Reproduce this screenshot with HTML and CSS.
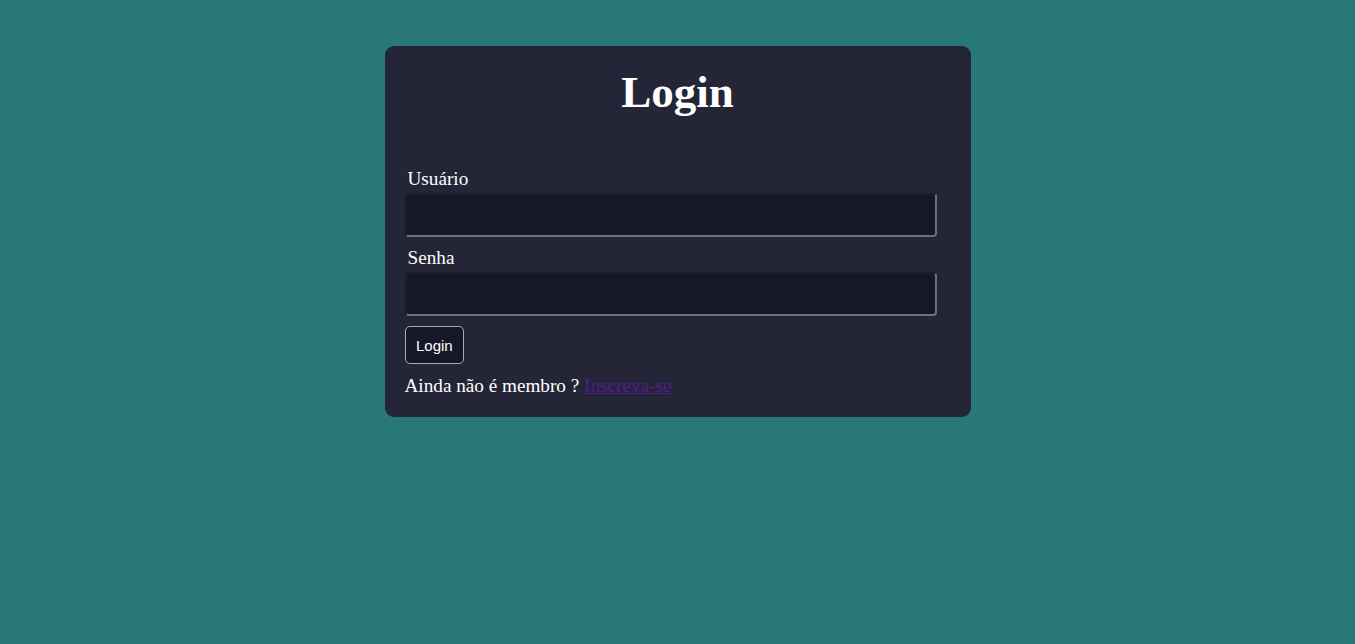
FILE: index.html
```html
<!DOCTYPE html>
<html lang="pt-BR">
<head>
<meta charset="utf-8">
<title>Login</title>
<link rel="stylesheet" href="styles.css">
</head>
<body>
<main class="page">
  <section class="card">
    <h1 class="title">Login</h1>
    <form class="form">
      <label class="label" for="user">Usuário</label>
      <input class="field" id="user" type="text">
      <label class="label" for="pass">Senha</label>
      <input class="field field-last" id="pass" type="password">
      <button class="btn" type="button">Login</button>
    </form>
    <p class="signup">Ainda não é membro ? <a class="link" href="#">Inscreva-se</a></p>
  </section>
</main>
</body>
</html>
```
FILE: styles.css
```css
html, body {
  margin: 0;
  padding: 0;
  height: 100%;
}
body {
  background: #287878;
  font-family: "Liberation Serif", "Times New Roman", serif;
  color: #ffffff;
}
.page {
  display: flex;
  justify-content: center;
  padding-top: 46px;
}
.card {
  width: 586px;
  box-sizing: border-box;
  background: #242638;
  border-radius: 9px;
  padding: 19px 20px 20px;
}
.title {
  margin: 0 0 47px;
  text-align: center;
  font-size: 45px;
  font-weight: bold;
  line-height: 55px;
}
.form {
  display: flex;
  flex-direction: column;
  align-items: flex-start;
}
.label {
  font-size: 19.2px;
  line-height: 23px;
  margin-left: 3px;
}
.field {
  box-sizing: border-box;
  width: 532px;
  height: 44px;
  margin: 3px 0 9px;
  background: #161827;
  border: 2px solid;
  border-color: #1d1e26 #6f7074 #6f7074 #1d1e26;
  border-radius: 4px;
  color: #fff;
  outline: none;
}
.field-last {
  margin-bottom: 10px;
}
.btn {
  box-sizing: border-box;
  height: 38px;
  padding: 0 10.5px;
  margin: 0;
  background: #161827;
  border: 1px solid #a3aac2;
  border-radius: 5px;
  color: #ffffff;
  font-family: "Liberation Sans", Arial, sans-serif;
  font-size: 15px;
}
.signup {
  margin: 11px 0 0;
  font-size: 19.2px;
  line-height: 22px;
}
.link {
  color: #551a8b;
}
```
